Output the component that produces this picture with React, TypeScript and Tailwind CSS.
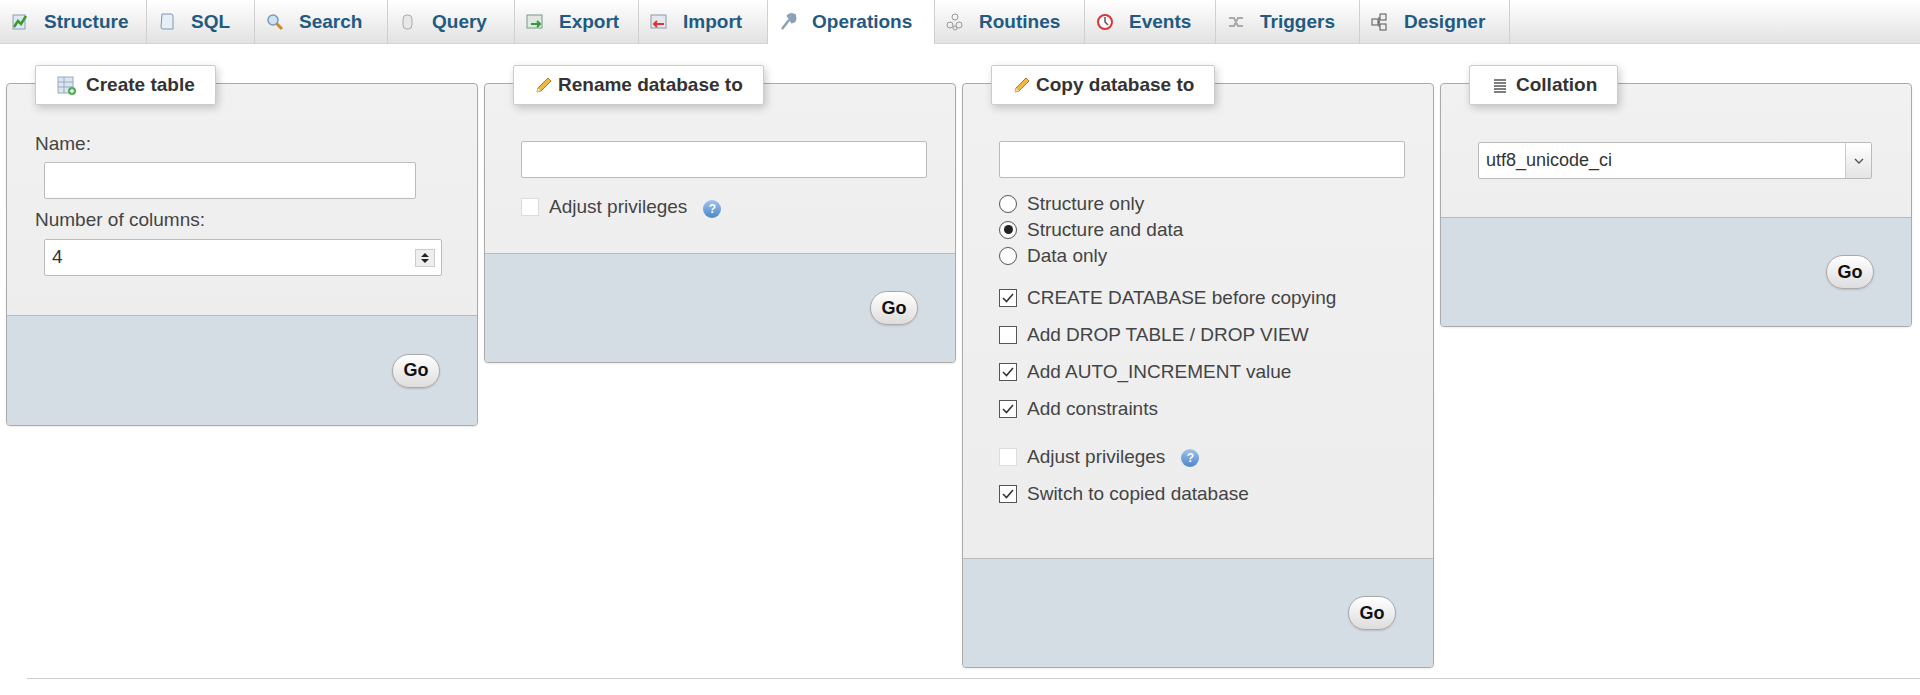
import React from "react";

const Ico = ({ c }: { c: React.ReactNode }) => (
  <svg width="20" height="20" viewBox="0 0 20 20" className="shrink-0">{c}</svg>
);

const tabs: { label: string; w: number; icon: React.ReactNode; active?: boolean }[] = [
  { label: "Structure", w: 147, icon: <Ico c={<><rect x="3" y="3" width="12" height="14" fill="#dfe8f0" stroke="#8aa0b8" /><path d="M4 15 L8 9 L11 12 L16 4" stroke="#3a9a2a" strokeWidth="2.5" fill="none" /></>} /> },
  { label: "SQL", w: 108, icon: <Ico c={<path d="M5 2 H14 Q16 2 16 4 V17 H6 Q4 17 4 15 Z" fill="#e6eef6" stroke="#7d97b5" />} /> },
  { label: "Search", w: 133, icon: <Ico c={<><circle cx="8" cy="8" r="5" fill="#cfe3f6" stroke="#7a9ab8" strokeWidth="1.5" /><path d="M11.5 11.5 L17 17" stroke="#c9902a" strokeWidth="3" /></>} /> },
  { label: "Query", w: 127, icon: <Ico c={<rect x="5" y="3" width="9" height="14" rx="4" fill="#e8e8e8" stroke="#aaa" />} /> },
  { label: "Export", w: 124, icon: <Ico c={<><rect x="2" y="3" width="15" height="13" fill="#dfe9df" stroke="#7a9a8a" /><path d="M6 12 H15 M12 9 L15 12 L12 15" stroke="#2e9a3a" strokeWidth="2" fill="none" /></>} /> },
  { label: "Import", w: 129, icon: <Ico c={<><rect x="2" y="3" width="15" height="13" fill="#e4e8ee" stroke="#8a9aae" /><path d="M5 12 H15 M8 9 L5 12 L8 15" stroke="#d33" strokeWidth="2" fill="none" /></>} /> },
  { label: "Operations", w: 167, active: true, icon: <Ico c={<path d="M4 17 L11 8 M10 4 Q13 1 16 3 L13 6 L15 8 L17 5 Q18 9 14 10 Z" stroke="#8aa0b8" strokeWidth="2.5" fill="#b0c0d0" />} /> },
  { label: "Routines", w: 150, icon: <Ico c={<><circle cx="10" cy="5" r="3" fill="none" stroke="#999" /><circle cx="5" cy="13" r="3" fill="none" stroke="#999" /><circle cx="14" cy="13" r="3" fill="none" stroke="#999" /><circle cx="10" cy="16" r="2" fill="none" stroke="#999" /></>} /> },
  { label: "Events", w: 131, icon: <Ico c={<><circle cx="10" cy="10" r="7" fill="#fff" stroke="#d33" strokeWidth="2" /><path d="M10 5 V10 L13 13" stroke="#555" strokeWidth="1.5" fill="none" /></>} /> },
  { label: "Triggers", w: 144, icon: <Ico c={<path d="M3 6 H8 L12 14 H17 M3 14 H8 L12 6 H17" stroke="#aaa" strokeWidth="2" fill="none" />} /> },
  { label: "Designer", w: 150, icon: <Ico c={<><rect x="10" y="2" width="6" height="6" fill="#eee" stroke="#555" /><rect x="10" y="12" width="6" height="6" fill="#eee" stroke="#555" /><rect x="2" y="7" width="6" height="6" fill="#eee" stroke="#555" /><path d="M8 10 H10 M9 5 V15" stroke="#555" /></>} /> },
];

const Pencil = () => (
  <svg width="20" height="20" viewBox="0 0 20 20"><path d="M3 17 L4 13 L14 3 L17 6 L7 16 Z" fill="#f0b840" stroke="#b07a20" /><path d="M3 17 L4 13 L7 16 Z" fill="#f6dcaa" /></svg>
);

const Legend = ({ children }: { children: React.ReactNode }) => (
  <div className="absolute -top-[19px] left-[28px] h-[40px] flex items-center gap-1 px-[20px] bg-white border border-[#ccc] rounded-[2px] shadow-[2px_3px_8px_rgba(0,0,0,0.2)] font-bold text-[19px] text-[#333]">
    {children}
  </div>
);

const Go = () => (
  <button className="h-[34px] w-[48px] rounded-full border border-[#aaa] bg-gradient-to-b from-white to-[#ddd] font-bold text-[18px] text-[#111] shadow-[0_1px_2px_rgba(0,0,0,0.15)]">Go</button>
);

const Footer = ({ h = 110 }: { h?: number }) => (
  <div className="border-t border-[#bbb] bg-[#d5dde4] flex items-center justify-end pr-[37px] rounded-b-[4px]" style={{ height: h }}>
    <Go />
  </div>
);

const Help = () => (
  <span className="inline-flex items-center justify-center w-[18px] h-[18px] rounded-full bg-gradient-to-b from-[#9fc4ec] to-[#4c86c8] text-white text-[12px] font-bold ml-[6px] mt-[3px]">?</span>
);

const Check = ({ on, faint }: { on?: boolean; faint?: boolean }) => (
  <span className={`w-[18px] h-[18px] border ${faint ? "border-[#ddd] bg-white" : "border-[#555] bg-white"} flex items-center justify-center shrink-0`}>
    {on && <svg width="14" height="14" viewBox="0 0 14 14"><path d="M2 7 L5.5 10.5 L12 3" stroke="#333" strokeWidth="1.6" fill="none" /></svg>}
  </span>
);

const Radio = ({ on }: { on?: boolean }) => (
  <span className="w-[18px] h-[18px] rounded-full border border-[#555] bg-white flex items-center justify-center shrink-0">
    {on && <span className="w-[9px] h-[9px] rounded-full bg-[#222]" />}
  </span>
);

const panel = "relative w-[472px] border border-[#aaa] rounded-[4px] bg-gradient-to-b from-[#f1f1f1] to-[#ececec] shadow-[0_1px_2px_rgba(0,0,0,0.08)]";
const input = "h-[37px] bg-white border border-[#bbb] rounded-[2px]";

export default function App() {
  return (
    <div className="w-[1920px] h-[695px] bg-white text-[#444] text-[19px] overflow-hidden" style={{ fontFamily: "'Liberation Sans', Arial, sans-serif" }}>
      <div className="h-[44px] flex bg-gradient-to-b from-white to-[#e2e2e2] border-b border-[#d6d6d6]">
        {tabs.map((t) => (
          <div key={t.label} style={{ width: t.w }} className={`h-[44px] flex items-center gap-[14px] pl-[10px] border-r border-[#d0d0d0] font-bold text-[19px] text-[#235a81] ${t.active ? "bg-white" : ""}`}>
            {t.icon}
            <span>{t.label}</span>
          </div>
        ))}
      </div>

      <div className="flex items-start gap-[6px] pl-[6px] pt-[39px]">
        <div className={panel}>
          <Legend>
            <svg width="22" height="22" viewBox="0 0 22 22"><rect x="2" y="3" width="15" height="16" fill="#dbe6f2" stroke="#9ab" /><path d="M2 8 H17 M2 13 H17 M8 3 V19" stroke="#9ab" /><circle cx="16" cy="17" r="4" fill="#4caf50" /><path d="M14 17 H18 M16 15 V19" stroke="#fff" strokeWidth="1.5" /></svg>
            <span className="ml-[4px]">Create table</span>
          </Legend>
          <div className="h-[231px] pl-[28px] pt-[48px]">
            <div className="leading-[24px]">Name:</div>
            <div className={`${input} w-[372px] ml-[9px] mt-[6px]`} />
            <div className="leading-[24px] mt-[9px]">Number of columns:</div>
            <div className={`${input} w-[398px] ml-[9px] mt-[7px] flex items-center justify-between pl-[7px] pr-[6px] text-[#333]`}>
              <span>4</span>
              <span className="w-[20px] h-[18px] border border-[#ccc] bg-[#eee] flex flex-col items-center justify-center">
                <svg width="12" height="14" viewBox="0 0 12 14"><path d="M2 6 L6 2 L10 6 Z M2 8 L6 12 L10 8 Z" fill="#222" /></svg>
              </span>
            </div>
          </div>
          <Footer h={110} />
        </div>

        <div className={panel}>
          <Legend>
            <Pencil />
            <span>Rename database to</span>
          </Legend>
          <div className="h-[169px] pl-[36px] pt-[57px]">
            <div className={`${input} w-[406px]`} />
            <div className="flex items-center mt-[15px] gap-[10px]">
              <Check faint />
              <span>Adjust privileges</span>
              <Help />
            </div>
          </div>
          <Footer h={109} />
        </div>

        <div className={panel}>
          <Legend>
            <Pencil />
            <span>Copy database to</span>
          </Legend>
          <div className="h-[474px] pl-[36px] pt-[57px]">
            <div className={`${input} w-[406px]`} />
            <div className="mt-[13px] flex flex-col gap-[1px] leading-[25px]">
              <label className="flex items-center gap-[10px]"><Radio />Structure only</label>
              <label className="flex items-center gap-[10px]"><Radio on />Structure and data</label>
              <label className="flex items-center gap-[10px]"><Radio />Data only</label>
            </div>
            <div className="mt-[17px] flex flex-col gap-[12px] leading-[25px]">
              <label className="flex items-center gap-[10px]"><Check on />CREATE DATABASE before copying</label>
              <label className="flex items-center gap-[10px]"><Check />Add DROP TABLE / DROP VIEW</label>
              <label className="flex items-center gap-[10px]"><Check on />Add AUTO_INCREMENT value</label>
              <label className="flex items-center gap-[10px]"><Check on />Add constraints</label>
            </div>
            <div className="mt-[23px] flex flex-col gap-[12px] leading-[25px]">
              <label className="flex items-center gap-[10px]"><Check faint />Adjust privileges<Help /></label>
              <label className="flex items-center gap-[10px]"><Check on />Switch to copied database</label>
            </div>
          </div>
          <Footer h={109} />
        </div>

        <div className={panel}>
          <Legend>
            <svg width="20" height="20" viewBox="0 0 20 20"><path d="M4 5 H16 M4 8 H16 M4 11 H16 M4 14 H16 M4 17 H16" stroke="#555" strokeWidth="1.5" /></svg>
            <span className="ml-[2px]">Collation</span>
          </Legend>
          <div className="h-[133px] pl-[37px] pt-[58px]">
            <div className={`${input} w-[394px] flex items-center justify-between pl-[7px] text-[#333] text-[18px]`}>
              <span>utf8_unicode_ci</span>
              <span className="w-[26px] h-full border-l border-[#ccc] bg-gradient-to-b from-white to-[#e4e4e4] flex items-center justify-center">
                <svg width="10" height="8" viewBox="0 0 10 8"><path d="M1 2 L5 6 L9 2" stroke="#555" strokeWidth="1.4" fill="none" /></svg>
              </span>
            </div>
          </div>
          <Footer h={109} />
        </div>
      </div>

      <div className="ml-[27px] mt-[10px] border-t border-[#ccc]" />
    </div>
  );
}
